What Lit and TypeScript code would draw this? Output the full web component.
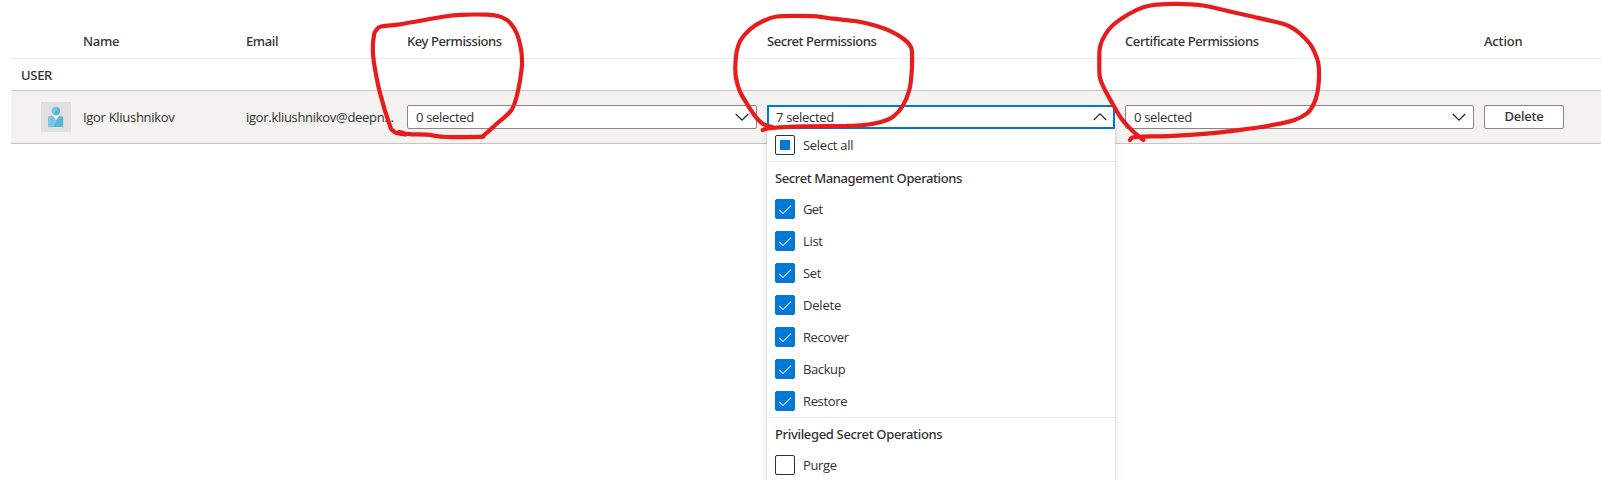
import { LitElement, html, svg, css } from "lit";
import { customElement, property } from "lit/decorators.js";
import { classMap } from "lit/directives/class-map.js";

type Point = [number, number];

/** Smooth open curve through the given points. */
function smooth(points: Point[]): string {
  let d = `M${points[0][0]} ${points[0][1]}`;
  for (let i = 0; i < points.length - 1; i++) {
    const p0 = points[Math.max(i - 1, 0)];
    const p1 = points[i];
    const p2 = points[i + 1];
    const p3 = points[Math.min(i + 2, points.length - 1)];
    const c = [
      p1[0] + (p2[0] - p0[0]) / 6, p1[1] + (p2[1] - p0[1]) / 6,
      p2[0] - (p3[0] - p1[0]) / 6, p2[1] - (p3[1] - p1[1]) / 6,
      p2[0], p2[1],
    ].map((n) => n.toFixed(1));
    d += ` C${c.join(" ")}`;
  }
  return d;
}

const MARKS: Point[][] = [
  [[399, 132], [402, 132.6], [406, 134.3], [396.5, 133], [393, 130.5], [390, 126], [380, 93], [374, 63], [372.8, 48], [374, 35], [376, 30.5], [381, 26.5], [400, 24.3], [443, 16.7], [460, 14.8], [487, 14.7], [498, 16], [506.5, 19.7], [511, 24], [516.7, 33.3], [521, 49], [522, 60], [521.5, 70], [517.5, 93], [511.5, 110], [496.5, 124], [486.5, 133], [483, 135.8], [480, 136.8], [446.5, 137], [426.5, 134.7], [412, 134.3], [396.5, 133]],
  [[762.7, 130], [772, 128], [803, 126.4], [846, 126], [863, 125.2], [880, 122.3], [893, 116.7], [902.7, 106], [909.3, 90], [911.6, 73], [912, 53], [910.7, 46.7], [905, 40], [893, 32.3], [876.7, 26], [856.7, 21.3], [833, 18.7], [816.7, 16.3], [800, 15.8], [776.7, 16.5], [763.3, 21], [750, 29.3], [740.7, 40], [736.7, 51.7], [735.3, 66.7], [736, 78], [740, 91.7], [746.7, 103.3], [755, 116], [763, 124], [772.7, 127.3]],
  [[1130, 140], [1132, 137.7], [1138, 136.8], [1173, 135.8], [1206.7, 133.7], [1237, 130.3], [1267, 126], [1293, 120.5], [1306.7, 113.7], [1313.3, 105], [1317.3, 93], [1319, 78], [1318.3, 63], [1315, 53.3], [1310, 44], [1300, 33.5], [1290, 26.7], [1280, 23], [1246.7, 15.3], [1226.7, 10.7], [1203, 5.5], [1176.7, 3.8], [1156.7, 4.7], [1143.3, 7.3], [1128, 14.5], [1113, 25], [1105, 35], [1100, 46.7], [1099.3, 63], [1100, 78], [1105, 90], [1115, 108], [1121.7, 119], [1133, 131.3], [1143.3, 140]],
];

interface Option { label: string; checked: boolean; tracking: number }
interface Group { title: string; tracking: number; options: Option[] }

const GROUPS: Group[] = [
  {
    title: "Secret Management Operations",
    tracking: -0.4,
    options: [
      { label: "Get", checked: true, tracking: -0.6 },
      { label: "List", checked: true, tracking: -0.3 },
      { label: "Set", checked: true, tracking: -0.4 },
      { label: "Delete", checked: true, tracking: -0.2 },
      { label: "Recover", checked: true, tracking: -0.4 },
      { label: "Backup", checked: true, tracking: -0.4 },
      { label: "Restore", checked: true, tracking: -0.35 },
    ],
  },
  {
    title: "Privileged Secret Operations",
    tracking: -0.33,
    options: [{ label: "Purge", checked: false, tracking: -0.35 }],
  },
];

const label = (text: string, tracking: number) =>
  html`<span style="letter-spacing:${tracking}px">${text}</span>`;

@customElement("check-box")
class CheckBox extends LitElement {
  @property() state: "on" | "off" | "mixed" = "off";

  static styles = css`
    :host { display: block; flex: none; }
    .box {
      box-sizing: border-box; width: 20px; height: 20px; border: 1px solid #323130;
      border-radius: 2px; background: #fff; display: grid; place-items: center;
    }
    .on { background: #0078d4; border-color: #0078d4; }
    .fill { width: 10px; height: 10px; background: #0078d4; }
    svg { display: block; }
  `;

  render() {
    return html`<div class=${classMap({ box: true, on: this.state === "on" })}>
      ${this.state === "mixed" ? html`<div class="fill"></div>` : null}
      ${this.state === "on"
        ? html`<svg width="18" height="18" viewBox="0 0 18 18"><path d="M3.2 10 L7 13.6 L15 5.6" fill="none" stroke="#d6eafa" stroke-width="1.05"/></svg>`
        : null}
    </div>`;
  }
}

@customElement("drop-down")
class DropDown extends LitElement {
  @property() value = "";
  @property({ type: Boolean }) open = false;

  static styles = css`
    :host { display: block; position: relative; }
    .field {
      box-sizing: border-box; height: 24px; border: 1px solid #8a8886; border-radius: 2px;
      background: #fff; display: flex; align-items: center; justify-content: space-between;
      padding: 0 7px 0 8px;
    }
    .field.open { border: 2px solid #0078d4; border-radius: 1px; padding: 0 6px 0 7px; }
    .value { letter-spacing: -0.3px; line-height: 18px; }
    .caret { display: block; }
    .open .caret { transform: scaleY(-1); }
    .menu {
      position: absolute; top: 100%; left: 0; right: 0; background: #fff;
      box-shadow: 0 3px 7px rgba(0, 0, 0, 0.13), 0 1px 2px rgba(0, 0, 0, 0.11);
    }
  `;

  render() {
    return html`
      <div class=${classMap({ field: true, open: this.open })}>
        <span class="value">${this.value}</span>
        <svg class="caret" width="14" height="10" viewBox="0 0 14 10">
          <path d="M0.8 2 L7 8.2 L13.2 2" fill="none" stroke="#252423" stroke-width="1.2"/>
        </svg>
      </div>
      ${this.open ? html`<div class="menu"><slot></slot></div>` : null}
    `;
  }
}

@customElement("app-root")
class AppRoot extends LitElement {
  static styles = css`
    :host {
      display: block; position: relative; height: 480px; overflow: hidden; background: #fff;
      font: 400 13px/18px "Open Sans", "Noto Sans", sans-serif; color: #323130;
    }
    .table { margin-left: 11px; }
    .row {
      display: grid; box-sizing: border-box; align-items: center;
      grid-template-columns: 72px 163px 161px 360px 358px 359px 80px;
    }
    .head {
      height: 59px; padding: 24px 0 1px; border-bottom: 1px solid #edebe9;
      font-family: "Noto Sans", sans-serif; font-weight: 500;
    }
    .group {
      box-sizing: border-box; height: 32px; padding: 7px 0 0 10px; border-bottom: 1px solid #c8c6c4;
      font-family: "Noto Sans", sans-serif; font-weight: 500; letter-spacing: -0.3px;
    }
    .user { height: 53px; background: #f3f2f1; border-bottom: 1px solid #c8c6c4; }
    .avatar { display: block; margin-left: 30px; }
    .row > drop-down { margin-right: 10px; }
    .mail { width: 151px; white-space: nowrap; }
    .button {
      box-sizing: border-box; height: 24px; border: 1px solid #8a8886; border-radius: 2px;
      background: #fff; text-align: center; line-height: 21px;
      font-family: "Noto Sans", sans-serif; font-weight: 500;
    }
    .option { display: flex; align-items: center; gap: 8px; height: 32px; padding-left: 8px; }
    .section { border-top: 1px solid #edebe9; }
    .title {
      height: 31px; line-height: 33px; padding-left: 8px;
      font-family: "Noto Sans", sans-serif; font-weight: 500;
    }
    .marks { position: absolute; left: 0; top: 0; z-index: 5; pointer-events: none; }
  `;

  private option(text: string, state: string, tracking: number) {
    return html`<div class="option"><check-box state=${state}></check-box>${label(text, tracking)}</div>`;
  }

  render() {
    return html`
      <div class="table">
        <div class="row head">
          <span></span>
          ${label("Name", -0.25)} ${label("Email", -0.4)} ${label("Key Permissions", -0.42)}
          ${label("Secret Permissions", -0.44)} ${label("Certificate Permissions", -0.4)}
          ${label("Action", -0.15)}
        </div>
        <div class="group">USER</div>
        <div class="row user">
          <svg class="avatar" width="30" height="30" viewBox="0 0 30 30">
            <rect width="30" height="30" fill="#e1dfdd"/>
            <circle cx="15" cy="9" r="4.2" fill="#59b4d9"/>
            <path d="M15 4.8a4.2 4.2 0 0 0 -2.4 7.6L17 5.3A4.2 4.2 0 0 0 15 4.8z" fill="#7cc5e2"/>
            <path d="M8.5 14.3H12.3L15 18L17.7 14.3H20.7Q22.2 14.3 22.2 16V25H7V16Q7 14.3 8.5 14.3z" fill="#59b4d9"/>
            <path d="M8.5 14.3H12.3L15 18L15.8 18.6L12.5 25H7V16Q7 14.3 8.5 14.3z" fill="#7cc5e2"/>
            <path d="M12.3 14.3H17.7L15 18z" fill="#f4f6f7"/>
          </svg>
          ${label("Igor Kliushnikov", -0.3)}
          <span class="mail">${label("igor.kliushnikov@deepn...", -0.3)}</span>
          <drop-down value="0 selected"></drop-down>
          <drop-down value="7 selected" open>
            ${this.option("Select all", "mixed", -0.28)}
            ${GROUPS.map((g) => html`<div class="section">
              <div class="title">${label(g.title, g.tracking)}</div>
              ${g.options.map((o) => this.option(o.label, o.checked ? "on" : "off", o.tracking))}
            </div>`)}
          </drop-down>
          <drop-down value="0 selected"></drop-down>
          <div class="button">${label("Delete", -0.2)}</div>
        </div>
      </div>
      <svg class="marks" width="1601" height="480" viewBox="0 0 1601 480">
        ${MARKS.map((m) => svg`<path d=${smooth(m)} fill="none" stroke="#e81c1c" stroke-width="4.2" stroke-linecap="round" stroke-linejoin="round"/>`)}
      </svg>
    `;
  }
}
